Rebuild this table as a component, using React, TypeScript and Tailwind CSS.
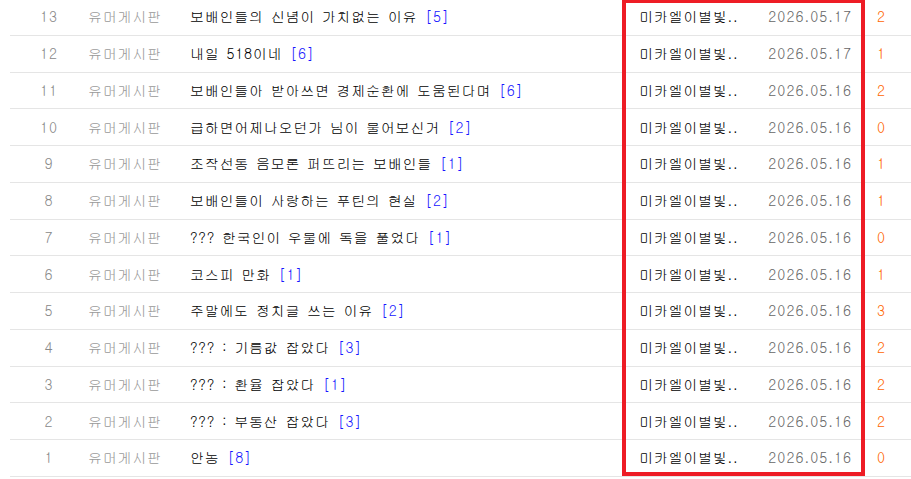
const rows = [
  { no: 13, title: "보배인들의 신념이 가치없는 이유", cmt: 5, date: "2026.05.17", rec: 2 },
  { no: 12, title: "내일 518이네", cmt: 6, date: "2026.05.17", rec: 1 },
  { no: 11, title: "보배인들아 받아쓰면 경제순환에 도움된다며", cmt: 6, date: "2026.05.16", rec: 2 },
  { no: 10, title: "급하면어제나오던가 님이 물어보신거", cmt: 2, date: "2026.05.16", rec: 0 },
  { no: 9, title: "조작선동 음모론 퍼뜨리는 보배인들", cmt: 1, date: "2026.05.16", rec: 1 },
  { no: 8, title: "보배인들이 사랑하는 푸틴의 현실", cmt: 2, date: "2026.05.16", rec: 1 },
  { no: 7, title: "??? 한국인이 우물에 독을 풀었다", cmt: 1, date: "2026.05.16", rec: 0 },
  { no: 6, title: "코스피 만화", cmt: 1, date: "2026.05.16", rec: 1 },
  { no: 5, title: "주말에도 정치글 쓰는 이유", cmt: 2, date: "2026.05.16", rec: 3 },
  { no: 4, title: "??? : 기름값 잡았다", cmt: 3, date: "2026.05.16", rec: 2 },
  { no: 3, title: "??? : 환율 잡았다", cmt: 1, date: "2026.05.16", rec: 2 },
  { no: 2, title: "??? : 부동산 잡았다", cmt: 3, date: "2026.05.16", rec: 2 },
  { no: 1, title: "안농", cmt: 8, date: "2026.05.16", rec: 0 },
];

export default function App() {
  return (
    <div className="relative min-h-[479px] bg-white text-[14px] tracking-[0.75px] font-['Gulim','Noto_Sans_CJK_KR',sans-serif]">
      <ul className="pl-[10px] -mt-[1px]">
        {rows.map((row) => (
          <li
            key={row.no}
            className="flex h-[36.75px] items-center border-b border-[#e5e5e5]"
          >
            <span className="w-[78px] text-center tracking-[1px] text-[#888]">{row.no}</span>
            <span className="w-[102px] text-[#999]">유머게시판</span>
            <span className="flex-1 whitespace-nowrap text-black [word-spacing:1.5px]">
              {row.title}
              <a className="ml-[8px] text-[#1515ff]">[{row.cmt}]</a>
            </span>
            <span className="w-[122px] text-black">미카엘이별빛..</span>
            <span className="w-[91px] text-right tracking-[1px] text-[#666]">{row.date}</span>
            <span className="w-[59px] text-center text-[#ff6600]">{row.rec}</span>
          </li>
        ))}
      </ul>
      <div className="pointer-events-none absolute left-[622px] top-0 h-[477px] w-[243px] border-[4px] border-[#ee1c25]" />
    </div>
  );
}
